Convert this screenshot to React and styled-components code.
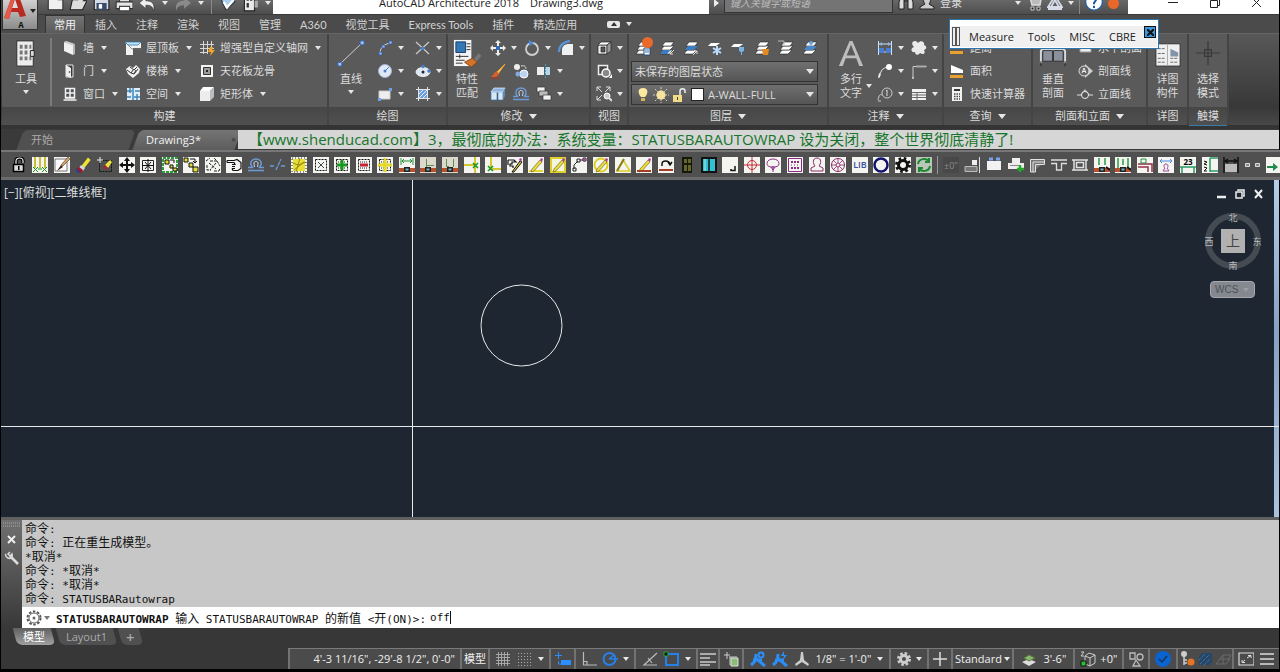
import { useState } from 'react';
import styled, { createGlobalStyle, css } from 'styled-components';

const SANS = `'Open Sans', 'Noto Sans CJK SC', sans-serif`;

const W = <path d="M0 0h16v16H0z" fill="#f4f4f0" />;
const pencil = <path d="M4 12l8-9 2 2-8 9-3 1z" fill="#e8dc3c" stroke="#6b5a12" strokeWidth=".6" />;
const pencilTip = <path d="M12 3l1-2 2 1-1 3z" fill="#b03aa0" />;
const dashBox = <path d="M2.500 2.500h11v11h-11z" fill="none" stroke="#111" strokeDasharray="2 1" />;
const wall = (
  <>
    <path d="M0 11h16v4H0z" fill="#b5512f" />
    <path d="M5 10h6v5H5z" fill="#222" />
    <path d="M6.500 11.500h3v2h-3z" fill="#6fb5c4" />
  </>
);
const layers = (
  <>
    <path d="M4 10l-3 4h9l4-4z" fill="#fff" stroke="#222" strokeWidth=".6" />
    <path d="M5 6l-3 4h9l4-4z" fill="#fff" stroke="#222" strokeWidth=".6" />
    <path d="M6 2L3 6h9l3-4z" fill="#fff" stroke="#222" strokeWidth=".6" />
  </>
);

const icons = {
  // ribbon: build
  wall: (
    <>
      <path d="M2 2l9 3v10l-9-4z" fill="#f1f1f1" />
      <path d="M11 5l2-1v10l-2 1z" fill="#b5b5b5" />
      <path d="M2 2l2-1 9 3-2 1z" fill="#d8d8d8" />
    </>
  ),
  door: (
    <>
      <path d="M4 2h7v12H4z" fill="#33383c" stroke="#e8e8e8" />
      <path d="M4 2l5 3v10l-5-2z" fill="#eee" />
      <circle cx="7.500" cy="9" r=".8" fill="#222" />
    </>
  ),
  window: <path d="M3.500 2.500h9v9h-9zM8 2v10M3 7h10M1.500 14h13M3 12h10" fill="#4d5357" stroke="#f2f2f2" strokeWidth="1.500" />,
  roof: (
    <>
      <path d="M0 2h16v6H8v7H1V4z" fill="#f2f2f2" />
      <path d="M0 2h16l-3 3H3z" fill="#c5e5fa" stroke="#2b79ad" strokeWidth=".8" />
      <path d="M3 5l4 4h9" stroke="#777" fill="none" strokeWidth=".8" />
    </>
  ),
  stairs: (
    <>
      <path d="M1 6l4-3 3 2 3-3 4 4-1 4-6 5-5-4z" fill="#f0f0f0" />
      <path d="M2 7l4 3 2-3M6 10l3 1 2-4M5 4l4 3 3-3M9 11l4-5" stroke="#333" fill="none" />
    </>
  ),
  space: (
    <>
      <path d="M2 2h13v12H2z" fill="#e2edf5" />
      <path d="M2 5h5M10 5h5M2 11h4M9 11h6M5 2v5M12 8v6M8 2v12" stroke="#3d86bd" strokeWidth="1.500" />
    </>
  ),
  grid: (
    <>
      <path d="M4.500 1v13M8.500 1v13M12.500 1v8M1 4.500h14M1 8.500h14M1 12.500h8" stroke="#d8d8d8" fill="none" />
      <path d="M11 7l-2 5h3l-1 4 5-6h-3l1-3z" fill="#f5a623" />
    </>
  ),
  ceiling: (
    <>
      <path d="M2 2h12v12H2z" fill="#f4f4f4" />
      <path d="M4.500 4.500h7v7h-7z" fill="#9a9a9a" stroke="#333" />
      <path d="M7 7h2v2H7z" fill="#222" />
    </>
  ),
  cube: (
    <>
      <path d="M1 5h10v10H1z" fill="#ededed" />
      <path d="M1 5l3-4h11l-4 4z" fill="#fff" />
      <path d="M11 5l4-4v10l-4 4z" fill="#bdbdbd" />
    </>
  ),
  // ribbon: draw
  arc: (
    <>
      <path d="M3 14C3 7 7 4 14 3" fill="none" stroke="#d5d5d5" />
      <path d="M2 12h3v3H2zM5 5h3v3H5zM12 1h3v3h-3z" fill="#8fb6ef" stroke="#2c5aa8" strokeWidth=".7" />
    </>
  ),
  xline: (
    <>
      <path d="M1 2l13 12M14 2L1 14" stroke="#ccc" strokeWidth="1.200" />
      <path d="M6 7h3v3H6z" fill="#3f86dd" />
    </>
  ),
  circle: (
    <>
      <circle cx="8" cy="8" r="6.500" fill="#dfe8f4" stroke="#9fb4d2" />
      <path d="M8 8l4-4" stroke="#4c80c9" />
      <circle cx="8" cy="8" r="1.500" fill="#4c80c9" />
    </>
  ),
  ellipse: (
    <>
      <ellipse cx="8" cy="9" rx="7" ry="4.500" fill="#dde8f6" stroke="#eee" />
      <circle cx="8" cy="9" r="1.500" fill="#222" />
      <circle cx="8" cy="3.500" r="1.800" fill="#4c80c9" />
      <circle cx="14" cy="8" r="1.800" fill="#4c80c9" />
    </>
  ),
  rect: (
    <>
      <path d="M2 5h11v8H2z" fill="#eee" stroke="#ccc" />
      <path d="M12 2h3v3h-3zM1 12h3v3H1z" fill="#6ea1ea" />
    </>
  ),
  hatch: (
    <>
      <path d="M3.500 1v14M12.500 1v14M1 3.500h14M1 12.500h14" stroke="#e4e4e4" fill="none" />
      <path d="M4 4h8v8H4z" fill="#6c9fe0" />
      <path d="M4 8l4-4M4 12l8-8M8 12l4-4" stroke="#e2eeff" />
    </>
  ),
  // ribbon: modify
  move: (
    <>
      <path d="M8 0l3 3H9v4h4V5l3 3-3 3V9H9v4h2l-3 3-3-3h2V9H3v2L0 8l3-3v2h4V3H5z" fill="#eee" />
      <path d="M6 6h4v4H6z" fill="#2f6cbc" />
    </>
  ),
  rotate: (
    <>
      <circle cx="8" cy="9" r="6" fill="none" stroke="#d0d0d0" strokeWidth="1.800" />
      <path d="M5 0l5 3-5 3z" fill="#4b8be0" />
    </>
  ),
  fillet: (
    <>
      <path d="M4 15V10c0-4 3-6 7-6h4v11z" fill="#eef0f2" />
      <path d="M1 12C1 5 5 2 12 1" fill="none" stroke="#5a95e0" strokeWidth="2" />
    </>
  ),
  brush: (
    <>
      <path d="M15 1L7 9l1 2z" fill="#f6d68b" stroke="#f0a22a" />
      <path d="M7 8l2 3c-2 4-5 3-8 3 2-1 3-5 6-6z" fill="#d4622a" />
      <path d="M1 15h9" stroke="#b9330f" />
    </>
  ),
  copy: (
    <>
      <circle cx="4" cy="4" r="3" fill="#eee" />
      <circle cx="11" cy="11" r="4" fill="#bcd3f3" stroke="#fff" />
      <circle cx="5" cy="11" r="2.500" fill="#83a9dd" />
      <path d="M8 3c4-1 5 1 5 3" fill="none" stroke="#ddd" />
    </>
  ),
  stretch: (
    <>
      <path d="M1 4h7v8H1z" fill="#eee" />
      <path d="M9 4h5v8H9z" fill="#b4d7ec" />
      <path d="M9.500 1v14" stroke="#3c9bd1" strokeDasharray="2 1" />
    </>
  ),
  array3d: (
    <>
      <path d="M1 6h6v8H1zM8 6h5v8H8z" fill="#d8e8f7" stroke="#426f9f" strokeWidth=".7" />
      <path d="M4 2h11l-2 4H1z" fill="#8ab3de" stroke="#e9f3ff" strokeWidth=".7" />
      <path d="M13 6l2-4v8l-2 4z" fill="#5f8bb9" />
    </>
  ),
  offset: (
    <g fill="none">
      <path d="M0 13.500h16M0 10.500h4.500L3 8C1 0 15 0 13 8l-1.500 2.500H16" stroke="#6c9bd8" strokeWidth="1.500" />
      <path d="M6.500 10L6 7c-1-3.500 5-3.500 4 0l-.5 3" stroke="#c4d6ef" />
    </g>
  ),
  scale: (
    <g stroke="#333" strokeWidth=".7">
      <path d="M1 1h8v5H1z" fill="#f2f2f2" />
      <path d="M3 5h9v5H3z" fill="#bbb" />
      <path d="M7 9h8v5H7z" fill="#f2f2f2" />
    </g>
  ),
  // ribbon: view
  box: (
    <g stroke="#222" strokeWidth=".7">
      <path d="M2 5h9v9H2z" fill="#eee" />
      <path d="M2 5l3-3h10l-4 3z" fill="#fff" />
      <path d="M11 5l4-3v9l-4 3z" fill="#9b9b9b" />
      <path d="M5 7h4v5H5z" fill="#555" />
    </g>
  ),
  shapes: (
    <>
      <path d="M2.500 2.500h9v9h-9z" fill="#444" stroke="#eee" strokeWidth="1.500" />
      <circle cx="10" cy="10" r="4" fill="#888" stroke="#fff" strokeWidth="1.500" />
      <path d="M13 15h3v-4z" fill="#fff" />
    </>
  ),
  zoomAll: (
    <>
      <path d="M1 1l5 5M14 1L9 6M1 14l5-5M1 5V1h4M10 1h4v4M1 10v4h4" stroke="#ddd" fill="none" />
      <circle cx="11" cy="10" r="3" fill="#ccc" stroke="#fff" />
      <path d="M13 12l3 3" stroke="#ddd" strokeWidth="2" />
    </>
  ),
  // ribbon: layers
  layerProps: (
    <>
      {layers}
      <path d="M9 8h6v7H9z" fill="#fff" stroke="#274c7b" />
      <path d="M10 10h4M10 12h4" stroke="#2f71b8" />
    </>
  ),
  layerOff: <>{layers}<path d="M4 10l-3 4h7l4-4z" fill="#3a7cc2" /><path d="M15 10l-4 4m0-3v3h3" stroke="#ddd" fill="none" /></>,
  layerOn: <>{layers}<path d="M5 6l-3 4h9l4-4z" fill="#3a7cc2" /><path d="M10 15l4-4m-3 0h3v3" stroke="#ddd" fill="none" /></>,
  layerFreeze: (
    <>
      <path d="M4 3L1 6h8l4-3z" fill="#fff" />
      <path d="M10 6v9M6 8l8 5M14 8l-8 5" stroke="#b9dcff" strokeWidth="2" />
    </>
  ),
  layerPin: (
    <>
      <path d="M4 4L1 7h8l4-3z" fill="#fff" />
      <path d="M9 7h5v4l-2 1v3h-1v-3l-2-1z" fill="#78b3e8" />
    </>
  ),
  layerLock: <>{layers}<path d="M8 9h7l-1 6H9z" fill="#e58b23" /></>,
  layerMatch: <>{layers}<path d="M0 1h6v4" stroke="#bbb" fill="none" /></>,
  layerIso: <>{layers}<path d="M5 6l-3 4h9l4-4z" fill="#4a86c8" /><circle cx="9" cy="3" r="2" fill="#6aa5e4" /></>,
  bulb: (
    <>
      <path d="M8 1c6 0 5 6 2 9H6C3 7 2 1 8 1z" fill="#fbe9a0" />
      <path d="M6 11h4v3H6z" fill="#d6b25a" />
    </>
  ),
  sun: (
    <>
      <path d="M8 0v16M0 8h16M2 2l12 12M14 2L2 14" stroke="#d5ccaa" strokeDasharray="2 1" />
      <circle cx="8" cy="8" r="4.500" fill="#f7e3a0" />
    </>
  ),
  unlock: (
    <>
      <path d="M9 8V4c0-3 5-3 5 0v2" stroke="#eee" strokeWidth="1.500" fill="none" />
      <path d="M2 8h9v7H2z" fill="#f2dc86" />
      <path d="M6 10h1v3H6z" fill="#444" />
    </>
  ),
  // ribbon: annotation
  dim: (
    <>
      <path d="M1.500 1v14M14.500 1v14M2 4h12M2 12h12" stroke="#cfe0f7" fill="none" />
      <path d="M2 8h5v5H2zM9 8h5v5H9z" fill="#4a7fd0" />
      <path d="M2 4l3-2v4zM14 4l-3-2v4z" fill="#8db5ec" />
    </>
  ),
  leader: (
    <>
      <path d="M2 15C3 7 6 5 10 4" stroke="#ddd" fill="none" strokeWidth="1.200" />
      <path d="M1 15l1-5 2 2z" fill="#eee" />
      <circle cx="12" cy="4" r="3" fill="#fff" />
    </>
  ),
  tag: (
    <>
      <path d="M1 14c1-5 2-6 4-5M1 15h3" stroke="#ccc" fill="none" />
      <circle cx="10" cy="7" r="5" fill="none" stroke="#ccc" />
      <path d="M9 5l1-1v6" stroke="#ddd" fill="none" />
    </>
  ),
  cloud: <path d="M4 1c2 0 2 1 3 2 2-3 7-2 6 2 3 1 3 4 0 5 2 4-1 5-4 3-2 3-5 2-5-1-4 1-5-4-1-5C0 4 1 1 4 1z" fill="#eaeaea" />,
  mleader: (
    <>
      <path d="M2 15V3.500h4" stroke="#ccc" fill="none" />
      <path d="M6 2v3M8 2v3M10 2v3M12 2v3M14 2v3M5 3.500h11" stroke="#aaa" />
      <path d="M1 15h2" stroke="#fff" />
    </>
  ),
  table: (
    <>
      <path d="M1 3h14v11H1z" fill="#f1f1f1" />
      <path d="M1 6.500h14M1 9h14M1 11.500h14M6 6v8" stroke="#666" />
    </>
  ),
  // ribbon: inquiry and sections
  ruler: <><path d="M2 3h11v6H2z" fill="#eee" /><path d="M1 11h13v3H1z" fill="#e9a02f" /></>,
  area: <><path d="M2 2l12 5v3H2z" fill="#fff" /><path d="M1 12h13v3H1z" fill="#e9a02f" /></>,
  calc: (
    <>
      <path d="M3 1h10v14H3z" fill="#f2f2f2" />
      <path d="M5 3h6v2H5z" fill="#333" />
      <path d="M5 8h6M5 10.500h6M5 13h6" stroke="#444" strokeWidth="1.500" strokeDasharray="1.500 1" />
    </>
  ),
  hsec: <path d="M3 3h11v9H3z" fill="#eee" stroke="#999" />,
  secLine: (
    <>
      <path d="M8 1l8 7-8 7" fill="#cfcfcf" />
      <circle cx="7" cy="8" r="5" fill="#666" stroke="#ddd" />
      <path d="M5 10l2-5 2 5M5.500 8.500h3" stroke="#eee" fill="none" />
    </>
  ),
  elevLine: (
    <>
      <path d="M0 9h16" stroke="#ddd" />
      <path d="M3 9l5-6 5 6z" fill="#bbb" />
      <circle cx="8" cy="9" r="3.500" fill="#555" stroke="#eee" />
    </>
  ),
  // toolbar
  tLock: (
    <>
      <path d="M5 7V4c0-4 7-4 7 0v2" fill="none" stroke="#000" strokeWidth="3.500" />
      <path d="M5 7V4c0-4 7-4 7 0v2" fill="none" stroke="#eee" strokeWidth="1.200" />
      <path d="M2.500 7.500h10v7h-10z" fill="#ddd" stroke="#000" strokeWidth="1.500" />
      <path d="M7 9h1.500v4H7z" />
    </>
  ),
  tWalls: <>{W}<path d="M3 0v11M13 0v11M8 0v11" stroke="#c9bf3a" strokeWidth="2" /><path d="M1 10l5 5M6 10l-5 5M10 10l5 5M15 10l-5 5M6 12h4" stroke="#199519" /></>,
  tBrush: <>{W}<path d="M1 2h12v12H1z" fill="#fff" stroke="#777" /><path d="M14 0L7 8l2 1 7-7z" fill="#d8a15b" stroke="#222" strokeWidth=".5" /><path d="M7 8l2 2-6 4z" fill="#44210e" /></>,
  tEraser: <><path d="M6 9l7-9 3 3-7 9z" fill="#eee23a" stroke="#333" strokeWidth=".5" /><path d="M4 11l2-3 4 3-2 3z" fill="#cfd4e8" /><path d="M2 11l2-1 4 3-2 3-3-1z" fill="#9b1c23" /><path d="M1 12l3 4" stroke="#243ea0" strokeWidth="2" /></>,
  tEraseSel: <><path d="M2.500 3.500h12v11h-12z" fill="none" stroke="#111" strokeDasharray="2 1" /><path d="M8 8l5-5 2 2-4 6z" fill="#eee23a" /><path d="M6 10l2-2 3 3-2 2z" fill="#a3262c" /><path d="M3 0v6M0 3h6" stroke="#eee" /></>,
  tMove: <>{W}<path d="M8 0l3 4H9v3h3V5l4 3-4 3V9H9v3h2l-3 4-3-4h2V9H4v2L0 8l4-3v2h3V4H5z" fill="#111" /></>,
  tMoveBox: <>{W}<path d="M2.500 3.500h11v10h-11z" fill="none" stroke="#222" /><path d="M8 2v13M2 8.500h12M5 5l6 7M11 5l-6 7" stroke="#111" /></>,
  tCopyBox: <>{W}<path d="M1 1h14v14H1z" fill="none" stroke="#2a9d3d" strokeWidth="2" strokeDasharray="3 1" /><path d="M3 3h4v4H3zM8 8h3v3H8zM11 11h4v3h-4z" fill="#e3dc35" stroke="#111" /><path d="M8 3h4v3" stroke="#111" fill="none" /></>,
  tCopy: <>{W}<path d="M1 1h4v4H1zM6 6h4v4H6zM10 10h5v5h-5z" fill="#e3dc35" stroke="#111" /><path d="M7 2h5v4m-2-2l2 2 2-2" stroke="#111" fill="none" /></>,
  tTwist: <>{W}<path d="M1 4l4-3M5 4h7l-3-3M12 4l3 5M4 6l7 6M11 6l-6 7M2 8v5h4M9 14h5l1-3" stroke="#222" fill="none" strokeDasharray="3 1" /></>,
  tHand: <>{W}<path d="M1 3.500h7l3-1 4 3v6l-3 2H7l-1-2M1 5.500h7l1 2H6M6 9.500h3M6 11.500h3M1 3.500v2" stroke="#111" fill="none" strokeWidth="1.200" /></>,
  tBreak: <path d="M0 9h5M11 9h5M6 13l5-11" stroke="#6c9bd8" strokeWidth="1.300" strokeDasharray="4 1" fill="none" />,
  tYellowHatch: <>{W}<path d="M2 2h12v12H2z" fill="#e9df32" /><path d="M2 6l5 2 8-3M5 15L9 1M3 13l10-8" stroke="#968b17" fill="none" /><path d="M1 1h14v14H1z" fill="none" stroke="#222" strokeDasharray="1 2" /></>,
  tXbox: <>{W}{dashBox}<path d="M5 5l6 6M11 5l-6 6" stroke="#444" /></>,
  tPlus: <>{W}{dashBox}<path d="M4 5h8M4 11h8" stroke="#222" strokeDasharray="1 1" /><path d="M8 3v10M3 8h10" stroke="#17991f" strokeWidth="3" /></>,
  tMinus: <>{W}{dashBox}<path d="M4 5h8M4 11h8" stroke="#222" strokeDasharray="1 1" /><path d="M4 8h8" stroke="#c22335" strokeWidth="3" /></>,
  tPlusY: <>{W}{dashBox}<path d="M4 5h8M4 11h8" stroke="#222" strokeDasharray="1 1" /><path d="M8 1v14M1 8h14" stroke="#e6d827" strokeWidth="3" /></>,
  tWallDim: <>{W}<path d="M2 1v7M14 1v7M3 4h10M5 2L3 4l2 2M11 2l2 2-2 2" stroke="#259135" fill="none" />{wall}</>,
  tWallL: <><path d="M0 0h16v16H0z" fill="#dcd8cc" /><path d="M6.500 2v8M6 8.500h8" stroke="#599054" />{wall}</>,
  tWallLL: <><path d="M0 0h16v16H0z" fill="#dcd8cc" /><path d="M4.500 2v8M11.500 2v8M4 9.500h3" stroke="#599054" />{wall}</>,
  tTrim: <>{W}<path d="M0 8h10M11 0v16" stroke="#d6c72e" strokeWidth="2" /><path d="M9 6l5 5M14 6l-5 5" stroke="#18951b" strokeWidth="1.500" /></>,
  tExtend: <>{W}<path d="M6 0v10M7 12h9" stroke="#d6c72e" strokeWidth="2" /><path d="M3 9l5 5M8 9l-5 5" stroke="#18951b" strokeWidth="1.500" /></>,
  tHandPen: <>{W}<path d="M1 3h6l2 2H5v2H3v2h3v2M1 3v5" stroke="#111" fill="none" strokeWidth="1.200" /><path d="M5 15l8-11 2 1-8 10z" fill="#d9cc2e" stroke="#111" />{pencilTip}</>,
  tPen: <>{W}<path d="M1 14h14" stroke="#e3d62d" strokeWidth="2" />{pencil}{pencilTip}</>,
  tPenBox: <><path d="M1 1h14v14H1z" fill="#f4f4e2" stroke="#ded12b" strokeWidth="2" />{pencil}{pencilTip}</>,
  tPoly: <>{W}<path d="M3 12V8l4-4M2 11h3v3H2zM6 2h3v3H6zM9 3h3M12 1h3v3h-3z" stroke="#222" fill="none" />{pencilTip}</>,
  tPenCircle: <>{W}<circle cx="8" cy="8" r="6.500" fill="none" stroke="#ddcf26" strokeWidth="2" />{pencil}{pencilTip}</>,
  tPenTri: <>{W}<path d="M2 14h13L8 3z" fill="none" stroke="#d9cb27" strokeWidth="1.500" /><path d="M2 14l7-12" stroke="#8a7d18" strokeWidth="2" /></>,
  tPenWall: <>{W}{pencil}{pencilTip}<path d="M1 13h14v2H1z" fill="#a63d25" /></>,
  tArcWall: <>{W}<path d="M4 9V7c0-4 7-4 8 0M10 5l2 3 2-3" stroke="#111" strokeWidth="1.500" fill="none" /><path d="M1 12h14v2H1z" fill="#a63d25" /></>,
  tDoor: <><path d="M3 0h10v16H3z" fill="#15180a" /><path d="M5 2h3v4H5zM9 2h3v4H9zM5 8h3v6H5zM9 8h3v6H9z" fill="#64672b" /></>,
  tGlass: <><path d="M1 1h14v14H1z" fill="#32bfd0" stroke="#111" strokeWidth="2" /><path d="M8 1v14" stroke="#111" strokeWidth="1.500" /><path d="M4 2v12" stroke="#9fe9ee" /></>,
  tCorner: <>{W}<path d="M13 9v4.500H9V12" stroke="#111" fill="none" strokeWidth="1.500" /></>,
  tTarget: <>{W}<circle cx="8" cy="8" r="4.500" fill="none" stroke="#c42b35" /><path d="M8 0v16M0 8h16" stroke="#c42b35" /></>,
  tTree: <>{W}<path d="M8 15V9M2 6.500c0-6 12-6 12 0 0 3-3 3.500-6 3.500S2 9.500 2 6.500zM6 10l2 3 2-3" fill="none" stroke="#8b2b86" /></>,
  tDots: <>{W}<path d="M1.500 1.500h13v13h-13z" fill="none" stroke="#8b2b86" /><path d="M4 5h8M4 11h8" stroke="#8b2b86" strokeWidth="2" strokeDasharray="2 1" /><path d="M4 8h8" stroke="#8b2b86" strokeDasharray="1 2" /></>,
  tPerson: <>{W}<path d="M8 1c5 0 4 6 2 8l4 2v3H2v-3l4-2C4 7 3 1 8 1z" fill="none" stroke="#8b2b6b" /></>,
  tWheel: <>{W}<circle cx="8" cy="8" r="6.500" fill="none" stroke="#8b2b6b" /><circle cx="8" cy="8" r="2" fill="none" stroke="#8b2b6b" /><path d="M8 1v5M8 10v5M1 8h5M10 8h5M3 3l3 3M13 3l-3 3M3 13l3-3M13 13l-3-3" stroke="#8b2b6b" strokeWidth=".8" /></>,
  tLib: <>{W}<text x="8" y="11" textAnchor="middle" fontSize="9" fontWeight="600" fontFamily="Open Sans, sans-serif" fill="#3a4fa0">LIB</text></>,
  tRing: <>{W}<circle cx="8" cy="8" r="6.500" fill="none" stroke="#12136e" strokeWidth="2.500" /></>,
  tGear: <>{W}<circle cx="8" cy="8" r="6.500" fill="none" stroke="#111" strokeWidth="3" strokeDasharray="2.500 2.600" /><circle cx="8" cy="8" r="4.500" fill="none" stroke="#111" strokeWidth="3" /></>,
  tRefresh: <><path d="M0 0h16v16H0z" fill="#b9c6b8" /><path d="M2 7c1-6 8-6 11-3M13 1v4H9M14 9c-1 6-8 6-11 3M3 15v-4h4" fill="none" stroke="#1e8731" strokeWidth="2" /></>,
  tLevel: <><path d="M0 0h16v16H0z" fill="#484848" /><text x="8" y="12" textAnchor="middle" fontSize="9" fontFamily="Open Sans, sans-serif" fill="#8c8c8c">±0"</text></>,
  tStep: <><path d="M1 9.500h12v5H1z" fill="#777" stroke="#bbb" /><path d="M8 3h5v5H8z" fill="#eee" /><path d="M15.500 0v16" stroke="#ddd" /></>,
  tPanel: <><path d="M1 4h14v9H1z" fill="#f2f2f2" /><path d="M3 2h4M10 2h4" stroke="#78a3e6" strokeWidth="3" /></>,
  tPrint: <><path d="M4 1h8v5H4zM0 6h16v6H0z" fill="#eee" /><path d="M2 8.500h9" stroke="#888" /><path d="M12 8v7M9 12h7" stroke="#24a82a" strokeWidth="2.500" /></>,
  tElbow: <path d="M1.500 2.500h14v5h-9V15h-5z M4 15V5h11" fill="#777" stroke="#e3e3e3" />,
  tTee: <path d="M0 3h16M0 6.500h5.500V13h5V6.500H16" fill="none" stroke="#ddd" strokeWidth="1.300" />,
  tFrame: <path d="M0 3h16M0 13h16M4.500 5.500h7v5h-7zM2 3v10M14 3v10" fill="none" stroke="#e0e0e0" strokeWidth="1.500" />,
  tGreenA: <>{W}<path d="M5 1v7M11 1v7" stroke="#2a9a48" strokeWidth="1.500" />{wall}<path d="M12 10l4 3" stroke="#111" strokeWidth="2" /></>,
  tGreenB: <>{W}<path d="M3 1v10M8 2v6M13 1v10" stroke="#2a9a48" strokeWidth="1.500" />{wall}<path d="M12 10l4 3" stroke="#111" strokeWidth="2" /></>,
  tRedCorner: <>{W}<path d="M1 7h14v8M1 10h10v5" fill="none" stroke="#952e47" strokeWidth="1.500" /><path d="M4 2h5v4H4z" fill="none" stroke="#259144" /></>,
  tDimPerson: <>{W}<path d="M2 4h12M4 2L2 4l2 2M12 2l2 2-2 2" fill="none" stroke="#4a8be0" /><path d="M8 7c3 0 2 4 1 4l2 3H5l2-3C6 11 5 7 8 7z" fill="none" stroke="#a04a9a" /></>,
  tNumH: <>{W}<path d="M0 10h16M2 10v6M14 10v6" stroke="#2a9a63" strokeWidth="1.500" /><text x="8" y="8" textAnchor="middle" fontSize="8" fontWeight="700" fontFamily="Open Sans, sans-serif">23</text></>,
  tNumV: <>{W}<path d="M8 1v14M8 1h8M8 14h8" stroke="#2a9a63" strokeWidth="1.500" fill="none" /><path d="M2 4l3 1-3 2 3 1M2 10l3 1-3 3h3" fill="none" stroke="#111" /></>,
  tDimBlack: <><path d="M1 0v16M15 0v16" stroke="#111" strokeWidth="1.500" /><path d="M2 7h12v8H2z" fill="#bbb" /><path d="M2 4h12M5 2L2 4l3 2M11 2l3 2-3 2" stroke="#111" fill="none" strokeWidth="1.500" /></>,
  tSquares: <path d="M.5 6.500h4v3h-4zM10.500 6.500h4v3h-4z" fill="#888" stroke="#ddd" />,
  tArrowG: <>{W}<path d="M1 9h6V6l5 4-5 4v-3H1z" fill="#228b4c" /></>,
  // status bar
  sGrid: <path d="M3.500 1v14M6.500 1v14M9.500 1v14M12.500 1v14M1 3.500h14M1 6.500h14M1 9.500h14M1 12.500h14" stroke="#b9b9b9" strokeWidth=".8" />,
  sSnap: <path d="M1 2.500h14M1 5.500h14M1 8.500h14M1 11.500h14M1 14.500h14" stroke="#aaa" strokeDasharray="1 2" />,
  sDyn: <><path d="M3.500 1v7M0 4.500h7M3.500 10v3H6" stroke="#2b8ffb" fill="none" /><path d="M6 9h10v5H6z" fill="#2b8ffb" /></>,
  sOrtho: <path d="M2.500 1v13H16M2 10.500h4V14" fill="none" stroke="#bbb" strokeWidth="1.200" />,
  sPolar: <><circle cx="7.500" cy="8" r="6" fill="none" stroke="#2580ea" strokeWidth="2" /><path d="M7 8h9M7 8l5-4" stroke="#2580ea" strokeWidth="1.500" /></>,
  sAngle: <path d="M15 2L2 14h13M6 7l4 5" fill="none" stroke="#bbb" strokeWidth="1.200" />,
  sSnapBox: <><path d="M3 3h12v11H3z" fill="none" stroke="#2580ea" strokeWidth="2" /><path d="M1 1h4v4H1z" fill="#0c1e0c" stroke="#27a33a" /></>,
  sLines: <path d="M0 3h16M0 7h10M0 11h16M0 14h10" stroke="#ccc" strokeWidth="1.500" />,
  sCycle: <><path d="M4 1v7M1 4h6M6 6h8M7 6v8" stroke="#ccc" /><path d="M8 7h7v8H8z" fill="#8bbd78" stroke="#ddd" /></>,
  sMan: <><path d="M6 3c0 6-1 8-5 11M6 8c3 1 4 3 9 7M3 9h9" stroke="#2b8ffb" strokeWidth="3" fill="none" /><circle cx="11" cy="4" r="2.500" fill="none" stroke="#2b8ffb" strokeWidth="2" /></>,
  sManBolt: <><path d="M6 3c0 6-1 8-5 11M6 8c3 1 4 3 9 7M3 9h9" stroke="#2b8ffb" strokeWidth="3" fill="none" /><path d="M12 0L9 5h3l-1 4 4-5h-3z" fill="#2b8ffb" /></>,
  sScale: <path d="M7 1h2l1 8 5 4-1 2-6-4-6 4-1-2 5-4z" fill="#ccc" />,
  sGear: <><circle cx="8" cy="8" r="5.500" fill="none" stroke="#ccc" strokeWidth="3" strokeDasharray="2.500 1.800" /><circle cx="8" cy="8" r="3.500" fill="none" stroke="#ccc" strokeWidth="3" /></>,
  sPlus: <path d="M8 1v14M1 8h14" stroke="#ddd" strokeWidth="1.500" />,
  sStack: <><path d="M1 11l7-3 7 3-7 4z" fill="#ddd" /><path d="M3 7l5-3 6 3-6 3z" fill="#8cb66d" stroke="#567a3f" /></>,
  sCube: <><path d="M5 5l4-3 6 2v8l-5 3-5-2zM5 5l5 2 5-3M10 7v8" fill="none" stroke="#ccc" /><path d="M1 10h5v5H1z" fill="#2cbe39" stroke="#111" /><path d="M1 1h3L1 5h3" fill="none" stroke="#ccc" /></>,
  sShapes: <><path d="M2 2h5v6H2z" fill="none" stroke="#bbb" strokeWidth="1.300" /><circle cx="12" cy="6" r="3" fill="none" stroke="#bbb" strokeWidth="1.300" /><path d="M8 9l4 6H5z" fill="none" stroke="#bbb" strokeWidth="1.300" /></>,
  sBlue: <><circle cx="8" cy="8" r="8" fill="#0a63cf" /><path d="M4 8l3 3 5-6" stroke="#14365f" strokeWidth="1.500" fill="none" /></>,
  sPin: <><circle cx="4" cy="3" r="3" fill="#ccc" /><path d="M4 3v11M4 9h3M4 12h3" stroke="#ccc" strokeWidth="1.500" /><circle cx="11" cy="11" r="3.500" fill="#e57425" /></>,
  sHatch: <><path d="M2 5l3-3h10v9l-3 3H2z" fill="#264766" /><path d="M2 9l6-6M3 13l9-9M7 14l6-6" stroke="#4b8dc7" strokeDasharray="1 1" /></>,
  sIso: <path d="M1 13l4-5h10l-4 5zM4 9l4-5h8l-3 5M8 4v9" fill="none" stroke="#6b6b6b" />,
  sFull: <><path d="M1 2h15v12H1z" fill="none" stroke="#ddd" strokeWidth="1.200" /><path d="M9 7l4-2.500M10 4.500h3V7M7 9l-3 2.500M4 9v2.500h3" stroke="#ddd" fill="none" /></>,
  sMenu: <path d="M1 3h14M1 8h14M1 13h14" stroke="#ddd" strokeWidth="1.500" />,
  // title bar
  qNew: <path d="M2 1h9l4 4v9H2zM11 1v4h4" fill="#f0f0f0" stroke="#333" />,
  qOpen: <path d="M1 14L3 5h5l2-3 5 2-2 2h3l-4 8z" fill="#ddd" stroke="#222" />,
  qSave: <><path d="M2 1h13v13H2z" fill="#d5dbe4" stroke="#222" /><path d="M4 8h9v6H4z" fill="#354b6d" /><path d="M6 9h3v4H6z" fill="#fff" /></>,
  qPrint: <><path d="M4 2h9v5H4zM1 7h15v6H1z" fill="#e5e5e5" stroke="#333" /><path d="M4 11h9v4H4z" fill="#fff" stroke="#444" /></>,
  qUndo: <path d="M1 8l6-5v3c6 0 8 3 7 9-1-4-3-5-7-5v3z" fill="#eee" stroke="#333" strokeWidth=".6" />,
  qRedo: <path d="M15 8L9 3v3C3 6 1 9 2 15c1-4 3-5 7-5v3z" fill="#8a8a8a" />,
  qSheet: <><path d="M2 3l5 11 8-7-5-6z" fill="#a9d0ee" stroke="#333" /><path d="M5 7l3 5 6-7" stroke="#fff" fill="none" strokeWidth="2" /></>,
  qDoor: <><path d="M3 0h9v15H3z" fill="#e9e9e9" stroke="#222" /><path d="M5 3h2v3H5zM8 3h2v3H8zM5 8h2v4H5z" fill="#333" /><path d="M12 6h3v6h-3" fill="#aaa" /></>,
  qFind: <path d="M1 14V7l2-5h3v12zM10 14V2h3l2 5v7zM6 6h4" fill="#ddd" stroke="#222" />,
  qUser: <path d="M8 1c5 0 4 6 2 8l5 3v2H1v-2l5-3C4 7 3 1 8 1z" fill="#ccc" stroke="#222" />,
  qCart: <><path d="M1 2h3l2 8h8l1-6H5" fill="#bbb" stroke="#ddd" strokeWidth="1.500" /><path d="M5 12h3v3H5zM11 12h3v3h-3z" fill="#222" stroke="#ccc" /></>,
  qApp: <path d="M8 1l7 11H1zM8 5l-4 7h8zM1 14h14" fill="none" stroke="#d6dde8" strokeWidth="1.800" />,
  qHelp: <><circle cx="8" cy="7" r="7.500" fill="#fff" stroke="#2a63a5" strokeWidth="1.300" /><path d="M5 5c0-4 6-3 5 0L8 8v1M8 10.500v2" fill="none" stroke="#205a9c" strokeWidth="1.800" /></>,
};

const Icon = ({ name, size = 16 }) => (
  <Svg width={size} height={size} viewBox="0 0 16 16" aria-hidden="true">{icons[name]}</Svg>
);

const bigIcons = {
  tools: (
    <>
      <path d="M6 3h17v26H6z" fill="#ececec" stroke="#2e2e2e" />
      <path d="M9 7h3v4H9zM14 7h3v4h-3zM19 7h2v4h-2zM9 13h3v4H9zM14 13h3v4h-3zM9 19h3v4H9zM14 19h3v4h-3zM19 19h2v4h-2z" fill="#777" />
      <path d="M20 13h4v6h-4z" fill="#ddd" stroke="#222" />
    </>
  ),
  line: (
    <>
      <path d="M4 27L27 5" stroke="#d6d6d6" />
      <path d="M2 25h4v4H2zM25 3h4v4h-4z" fill="#a5c5f6" stroke="#3565b1" />
    </>
  ),
  match: (
    <>
      <path d="M2 2h18v27H2z" fill="#f4f4f4" />
      <path d="M4 4h10v11H4z" fill="#3477b5" stroke="#173e67" />
      <path d="M15 6h4M15 9h4M15 12h4M4 19h13M4 23h9M4 26h7M8 17v4" stroke="#333" />
      <path d="M29 17l-6 7" stroke="#777" strokeWidth="4" />
      <path d="M13 25l8-4 5 4-6 5z" fill="#d3742a" stroke="#8a4514" />
    </>
  ),
  text: <path d="M3 29L14 3h3l11 26h-4l-3-8H10l-3 8zM11 18h9L15.500 7z" fill="#bdbdbd" />,
  section: (
    <>
      <path d="M2 13L8 5h14l7 8v13h-2V14H4v12H2z" fill="#d5dae0" />
      <path d="M5 13h10v11H5zM16 13h10v11H16z" fill="#8b919c" stroke="#333" />
      <path d="M3 24v5M28 24v5" stroke="#222" />
    </>
  ),
  detail: (
    <>
      <path d="M3 6h25v23H3z" fill="#efefef" stroke="#333" />
      <path d="M5 11h8M5 16h8M5 21h8M5 25h8M18 21h8M18 25h8" stroke="#666" strokeDasharray="3 1" />
      <path d="M18 11l8 4v4h-8z" fill="#8494a8" />
      <path d="M15 6v23" stroke="#aaa" />
    </>
  ),
  touch: <path d="M15.500 3v25M3 15.500h25M12 12h7v7h-7z" fill="none" stroke="#383838" strokeWidth="1.200" />,
};

const BigIcon = ({ name }) => (
  <Svg width={30} height={30} viewBox="0 0 31 31" aria-hidden="true">{bigIcons[name]}</Svg>
);

const ribbonTabs = ['常用', '插入', '注释', '渲染', '视图', '管理', 'A360', '视觉工具', 'Express Tools', '插件', '精选应用'];

const drawTools = [
  'tLock', 'tWalls', 'tBrush', 'tEraser', 'tEraseSel', 'tMove', 'tMoveBox', 'tCopyBox', 'tCopy', 'tTwist', 'tHand',
  'offset', 'tBreak', 'tYellowHatch', 'tXbox', 'tPlus', 'tMinus', 'tPlusY', 'tWallDim', 'tWallL', 'tWallLL', 'tTrim',
  'tExtend', 'tHandPen', 'tPen', 'tPenBox', 'tPoly', 'tPenCircle', 'tPenTri', 'tPenWall', 'tArcWall', 'tDoor', 'tGlass',
  'tCorner', 'tTarget', 'tTree', 'tDots', 'tPerson', 'tWheel', 'tLib', 'tRing', 'tGear', 'tRefresh',
];
const wallTools = [
  'tLevel', 'tStep', 'tPanel', 'tPrint', 'tElbow', 'tTee', 'tFrame', 'tGreenA', 'tGreenB', 'tRedCorner', 'tDimPerson',
  'tNumH', 'tNumV', 'tDimBlack', 'tSquares', 'tArrowG',
];

const history = ['命令:', '命令: 正在重生成模型。', '*取消*', '命令: *取消*', '命令: *取消*', '命令: STATUSBARautowrap'];

const statusCells = [
  { w: 172, text: `4'-3 11/16", -29'-8 1/2", 0'-0"`, end: true },
  { w: 28, text: '模型' },
  { w: 61, items: ['sGrid', 'sSnap', 'v'] },
  { w: 25, items: ['sDyn'] },
  { w: 60, items: ['sOrtho', 'sPolar', 'v'] },
  { w: 62, items: ['sAngle', 'sSnapBox', 'v'] },
  { w: 22, items: ['sLines'] },
  { w: 24, items: ['sCycle'] },
  { w: 147, items: ['sMan', 'sManBolt', 'sScale'], text: `1/8" = 1'-0"`, menu: true },
  { w: 38, items: ['sGear', 'v'] },
  { w: 24, items: ['sPlus'] },
  { w: 61, text: 'Standard', menu: true },
  { w: 61, items: ['sStack'], text: `3'-6"` },
  { w: 49, items: ['sCube'], text: '+0"' },
  { w: 26, items: ['sShapes'] },
  { w: 28, items: ['sBlue'] },
  { w: 56, items: ['sPin', 'sHatch', 'sIso'] },
  { w: 47, items: ['sFull', 'sMenu'] },
];

const Tool = ({ icon, label, menu }) => (
  <ToolButton type="button" aria-label={label || icon}>
    <Icon name={icon} />
    {label && <span>{label}</span>}
    {menu && <Arrow />}
  </ToolButton>
);

const BigTool = ({ icon, lines, menu, side, width }) => (
  <BigButton type="button" $w={width}>
    <BigIcon name={icon} />
    <BigLabel>
      <span>{lines.map((l) => <div key={l}>{l}</div>)}</span>
      {side && <SideArrow />}
    </BigLabel>
    {menu && <Arrow />}
  </BigButton>
);

const Panel = ({ title, width, menu, active, children }) => (
  <PanelBox $w={width}>
    <PanelBody>{children}</PanelBody>
    <PanelTitle $active={active}>
      {title}
      {menu && <Arrow $big />}
    </PanelTitle>
  </PanelBox>
);

// latin runs are set one size below the chinese glyphs
const Mixed = ({ text }) => text.split(/([\x20-\x7e]+)/).map((part, i) => (i % 2 ? <Mono key={i}>{part}</Mono> : part));

const Header = () => (
  <HeaderGrid>
    <AppButton type="button" aria-label="A">
      <Svg width="24" height="21" viewBox="0 0 24 21">
        <path d="M0 18L8-4h7l7 20-6 1-2-5H7l-2 7z" fill="#b92b20" />
        <path d="M8 8l3-9 3 9z" fill="#ddd" />
        <path d="M0 18L8-4l3 1-6 22z" fill="#e25a4a" />
      </Svg>
      <AppLetter>A</AppLetter>
      <AppArrow />
    </AppButton>
    <TitleBar>
      <QuickAccess>
        {['qNew', 'qOpen', 'qSave', 'qPrint', 'qUndo'].map((n) => <QuickButton key={n} type="button" aria-label={n}><Icon name={n} size={18} /></QuickButton>)}
        <Arrow />
        <QuickButton type="button" aria-label="redo"><Icon name="qRedo" size={18} /></QuickButton>
        <Arrow />
        <BarLine />
        <QuickButton type="button" aria-label="sheet"><Icon name="qSheet" size={18} /></QuickButton>
        <QuickButton type="button" aria-label="project"><Icon name="qDoor" size={18} /></QuickButton>
        <Arrow />
      </QuickAccess>
      <Caption>
        <span>AutoCAD Architecture 2018</span>
        <span>Drawing3.dwg</span>
      </Caption>
      <InfoCenter>
        <RightArrow />
        <Search aria-label="search" placeholder="键入关键字或短语" />
        <Icon name="qFind" />
        <Icon name="qUser" />
        <SignIn href="#">登录</SignIn>
        <Arrow />
        <Icon name="qCart" />
        <Icon name="qApp" />
        <Arrow />
        <BarLine />
        <Icon name="qHelp" size={18} />
        <Dot />
      </InfoCenter>
      <WindowButtons>
        <button type="button" aria-label="minimize"><Svg width="10" height="10"><path d="M0 4.500h10" stroke="#222" /></Svg></button>
        <button type="button" aria-label="restore"><Svg width="10" height="10"><path d="M.5 2.500h7v7h-7zM2.500 2V.5h7v7H8" fill="none" stroke="#222" /></Svg></button>
        <button type="button" aria-label="close"><Svg width="10" height="10"><path d="M0 0l9 9M9 0L0 9" stroke="#222" /></Svg></button>
      </WindowButtons>
    </TitleBar>
    <TabBar>
      {ribbonTabs.map((t, i) => <RibbonTab key={t} type="button" $active={i === 0}>{t}</RibbonTab>)}
      <Collapse type="button" aria-label="collapse"><Arrow $up /></Collapse>
      <Arrow />
    </TabBar>
  </HeaderGrid>
);

const Ribbon = () => (
  <RibbonBar>
    <Panel title="构建" width={327}>
      <BigTool icon="tools" lines={['工具']} menu width={48} />
      <Divider />
      <Columns>
        <Column><Tool icon="wall" label="墙" menu /><Tool icon="door" label="门" menu /><Tool icon="window" label="窗口" menu /></Column>
        <Column><Tool icon="roof" label="屋顶板" menu /><Tool icon="stairs" label="楼梯" menu /><Tool icon="space" label="空间" menu /></Column>
        <Column><Tool icon="grid" label="增强型自定义轴网" menu /><Tool icon="ceiling" label="天花板龙骨" /><Tool icon="cube" label="矩形体" menu /></Column>
      </Columns>
    </Panel>
    <Panel title="绘图" width={119}>
      <BigTool icon="line" lines={['直线']} menu width={44} />
      <Columns $gap={11}>
        <Column $pad={4}><Tool icon="arc" menu /><Tool icon="circle" menu /><Tool icon="rect" menu /></Column>
        <Column><Tool icon="xline" menu /><Tool icon="ellipse" menu /><Tool icon="hatch" menu /></Column>
      </Columns>
    </Panel>
    <Panel title="修改" width={143} menu>
      <BigTool icon="match" lines={['特性', '匹配']} width={38} />
      <Column $pad={4}>
        <Row><Tool icon="move" menu /><Tool icon="rotate" menu /><Tool icon="fillet" menu /></Row>
        <Row><Tool icon="brush" /><Tool icon="copy" /><Tool icon="stretch" menu /></Row>
        <Row><Tool icon="array3d" /><Tool icon="offset" /><Tool icon="scale" menu /></Row>
      </Column>
    </Panel>
    <Panel title="视图" width={38}>
      <Column $pad={5}><Tool icon="box" menu /><Tool icon="shapes" menu /><Tool icon="zoomAll" menu /></Column>
    </Panel>
    <Panel title="图层" width={200} menu>
      <LayerColumn>
        <LayerIcons>
          {['layerProps', 'layerOff', 'layerOn', 'layerFreeze', 'layerPin', 'layerLock', 'layerMatch', 'layerIso'].map((n) => (
            <Tool key={n} icon={n} />
          ))}
          <Alert />
        </LayerIcons>
        <ComboBox>
          <select aria-label="图层状态"><option>未保存的图层状态</option></select>
          <Arrow $big />
        </ComboBox>
        <ComboBox>
          <Icon name="bulb" /><Icon name="sun" /><Icon name="unlock" /><Swatch />
          <select aria-label="图层"><option>A-WALL-FULL</option></select>
          <Arrow $big />
        </ComboBox>
      </LayerColumn>
    </Panel>
    <Panel title="注释" width={115} menu>
      <BigTool icon="text" lines={['多行', '文字']} side width={44} />
      <Columns>
        <Column $pad={4}><Tool icon="dim" menu /><Tool icon="leader" menu /><Tool icon="tag" menu /></Column>
        <Column><Tool icon="cloud" menu /><Tool icon="mleader" menu /><Tool icon="table" menu /></Column>
      </Columns>
    </Panel>
    <Panel title="查询" width={89} menu>
      <Column $pad={5}><Tool icon="ruler" label="距离" /><Tool icon="area" label="面积" /><Tool icon="calc" label="快速计算器" /></Column>
    </Panel>
    <Panel title="剖面和立面" width={115} menu>
      <BigTool icon="section" lines={['垂直', '剖面']} width={40} />
      <Column $pad={4}><Tool icon="hsec" label="水平剖面" /><Tool icon="secLine" label="剖面线" /><Tool icon="elevLine" label="立面线" /></Column>
    </Panel>
    <Panel title="详图" width={41}><BigTool icon="detail" lines={['详图', '构件']} width={39} /></Panel>
    <Panel title="触摸" width={40} active><BigTool icon="touch" lines={['选择', '模式']} width={38} /></Panel>
    <FloatingBar>
      <FloatCaption />
      <FloatMenu>
        <Grip />
        <FloatItems>
          {['Measure', 'Tools', 'MISC', 'CBRE'].map((m) => <button key={m} type="button">{m}</button>)}
        </FloatItems>
        <FloatClose type="button" aria-label="close">
          <Svg width="7" height="7"><path d="M0 0l7 7M7 0L0 7" stroke="#111" strokeWidth="2" /></Svg>
        </FloatClose>
      </FloatMenu>
    </FloatingBar>
  </RibbonBar>
);

const DrawingArea = () => (
  <Canvas>
    <Scene>
      <path d="M411.500 0V400" stroke="#e8e8e8" />
      <line x1="0" x2="100%" y1="246.500" y2="246.500" stroke="#e8e8e8" />
      <circle cx="520.500" cy="145.500" r="40.500" fill="none" stroke="#e8e8e8" />
    </Scene>
    <ViewLabel>[−][俯视][二维线框]</ViewLabel>
    <Navigator>
      <MdiButtons>
        <Svg width="9" height="10"><path d="M0 8h9" stroke="#eee" strokeWidth="2.500" /></Svg>
        <Svg width="10" height="10"><path d="M1 3h6v6H1zM3 2V1h6v6H8" fill="none" stroke="#eee" strokeWidth="1.500" /></Svg>
        <Svg width="9" height="10"><path d="M1 1l7 8M8 1L1 9" stroke="#eee" strokeWidth="2" /></Svg>
      </MdiButtons>
      <Compass>
        <span>北</span>
        <span>西</span><Cube type="button">上</Cube><span>东</span>
        <span>南</span>
      </Compass>
      <Wcs type="button">WCS <Arrow $dim /></Wcs>
    </Navigator>
    <ScrollStrip />
  </Canvas>
);

const CommandWindow = () => {
  const [value, setValue] = useState('off');
  return (
    <Command>
      <CommandSide>
        <Svg width="17" height="6"><path d="M0 1h17M0 4h17" stroke="#aaa" strokeDasharray="1 1" /></Svg>
        <Svg width="9" height="9"><path d="M1 1l7 7M8 1L1 8" stroke="#eee" strokeWidth="2" /></Svg>
        <Svg width="14" height="14" viewBox="0 0 14 14"><path d="M5 5l8 8" stroke="#ddd" strokeWidth="2.500" /><path d="M5 1L3 3l2 2 2-2c1 4-2 5-4 4S0 4 1 3" fill="none" stroke="#ddd" strokeWidth="1.500" /></Svg>
      </CommandSide>
      <CommandMain>
        <History>{history.map((line, i) => <div key={i}><Mixed text={line} /></div>)}</History>
        <Prompt>
          <Svg width="16" height="16" viewBox="0 0 16 16">
            <circle cx="8" cy="8" r="6.500" fill="none" stroke="#555" strokeWidth="2" strokeDasharray="2.500 1.600" />
            <circle cx="8" cy="8" r="5" fill="#fff" stroke="#666" />
            <circle cx="8" cy="8" r="1.500" fill="#666" />
          </Svg>
          <Arrow $dark />
          <label htmlFor="cmd">
            <b><Mixed text="STATUSBARAUTOWRAP" /></b>
            <Mixed text=" 输入 STATUSBARAUTOWRAP 的新值 <开(ON)>:" />
          </label>
          <CommandInput id="cmd" value={value} onChange={(e) => setValue(e.target.value)} />
          <Caret />
        </Prompt>
      </CommandMain>
    </Command>
  );
};

const StatusBar = () => (
  <StatusWrap>
    <Status>
      {statusCells.map((c, i) => (
        <Cell key={i} $w={c.w} $end={c.end}>
          {c.items?.map((n) => (n === 'v' ? <Arrow key={n} /> : <Icon key={n} name={n} />))}
          {c.text && <span>{c.text}</span>}
          {c.menu && <Arrow />}
        </Cell>
      ))}
    </Status>
  </StatusWrap>
);

export default function App() {
  return (
    <>
      <GlobalStyle />
      <Shell>
        <Header />
        <Ribbon />
        <DocBar>
          <DocTab type="button" $w={116}>开始</DocTab>
          <DocTab type="button" $w={106} $active>Drawing3* <small>×</small></DocTab>
          <Banner>【www.shenducad.com】3，最彻底的办法：系统变量：STATUSBARAUTOWRAP 设为关闭，整个世界彻底清静了!</Banner>
        </DocBar>
        <Toolbar>
          <ToolGroup $n={43}>{drawTools.map((n) => <button key={n} type="button" aria-label={n}><Icon name={n} /></button>)}</ToolGroup>
          <ToolLine />
          <ToolGroup $n={16}>{wallTools.map((n) => <button key={n} type="button" aria-label={n}><Icon name={n} /></button>)}</ToolGroup>
        </Toolbar>
        <DrawingArea />
        <CommandWindow />
        <LayoutTabs>
          <LayoutTab type="button" $active>模型</LayoutTab>
          <LayoutTab type="button">Layout1</LayoutTab>
          <LayoutTab type="button" $add>+</LayoutTab>
        </LayoutTabs>
        <StatusBar />
      </Shell>
    </>
  );
}

const GlobalStyle = createGlobalStyle`
  * { box-sizing: border-box; }
  body { margin: 0; background: #000; overflow: hidden; }
  button, input, select { font: inherit; color: inherit; background: none; border: 0; padding: 0; margin: 0; }
`;

const Svg = styled.svg` display: block; flex: none; `;

const Shell = styled.div`
  display: flex;
  flex-direction: column;
  height: 100vh;
  padding: 0 1px;
  overflow: hidden;
  background: #000;
  color: #dcdcdc;
  font: 11px/14px ${SANS};
`;

const Arrow = styled.i`
  flex: none;
  width: 0;
  height: 0;
  border: solid transparent;
  border-width: 4px 3px 0;
  border-top-color: #e6e6e6;
  ${(p) => p.$big && css` border-width: 5px 4px 0; `}
  ${(p) => p.$dark && css` border-top-color: #777; `}
  ${(p) => p.$dim && css` border-top-color: #9b9ea5; `}
  ${(p) => p.$up && css` border-width: 0 3px 4px; border-bottom-color: #333; `}
`;

const RightArrow = styled(Arrow)` border-width: 4px 0 4px 5px; border-color: transparent transparent transparent #eee; `;
const SideArrow = styled(Arrow)` margin-left: 4px; margin-right: -10px; `;

const HeaderGrid = styled.header`
  flex: none;
  display: grid;
  grid-template-columns: 37px 1fr;
  grid-template-rows: 14px 19px;
  background: #4b4b4b;
`;

const AppButton = styled.button`
  grid-row: 1 / 3;
  display: grid;
  grid-template-columns: 26px 1fr;
  align-items: center;
  justify-items: center;
  margin: 0 0 3px 1px;
  border: 1px solid #333;
  border-top: 0;
  background: linear-gradient(#d0d0d0, #8b8b8b);
  overflow: hidden;
`;
const AppLetter = styled.b` grid-row: 2; color: #111; font-size: 8px; line-height: 8px; padding-left: 10px; `;
const AppArrow = styled(Arrow)` grid-row: 1; grid-column: 2; border-top-color: #222; `;

const TitleBar = styled.div`
  display: flex;
  align-items: flex-end;
  height: 14px;
  overflow: hidden;
  background: #fff;

  > * { flex: none; height: 22px; display: flex; align-items: center; }
`;
const QuickAccess = styled.div`
  width: 235px;
  gap: 7px;
  padding-left: 9px;
  background: linear-gradient(#777, #4d4d4d);
`;
const QuickButton = styled.button` width: 16px; display: flex; justify-content: center; `;
const BarLine = styled.i` width: 1px; height: 22px; background: #888; `;
const Caption = styled.div`
  && { flex: 1; }
  justify-content: center;
  gap: 11px;
  color: #222;
  white-space: nowrap;
`;
const InfoCenter = styled.div`
  width: 419px;
  gap: 5px;
  padding-left: 5px;
  background: linear-gradient(#777, #4d4d4d);
`;
const Search = styled.input`
  flex: none;
  width: 169px;
  height: 20px;
  padding-left: 5px;
  border: 1px solid #333;
  background: #747474;
  font-size: 10px;
  font-style: italic;
  &::placeholder { color: #bbb; }
`;
const SignIn = styled.a` color: #ddd; text-decoration: none; white-space: nowrap; margin-right: 48px; `;
const Dot = styled.i` width: 11px; height: 11px; border-radius: 50%; background: #e8672a; `;
const WindowButtons = styled.div`
  width: 151px;
  justify-content: space-between;
  padding: 0 17px 0 40px;
`;

const TabBar = styled.nav`
  display: flex;
  align-items: center;
  gap: 1px;
  padding-left: 7px;
  border-top: 1px solid #3a3a3a;
`;
const RibbonTab = styled.button`
  height: 18px;
  padding: 0 8px;
  border: 1px solid transparent;
  border-bottom: 0;
  color: #d2d2d2;
  font-family: Lato, 'Noto Sans CJK SC', sans-serif;
  white-space: nowrap;
  ${(p) => p.$active && css` background: linear-gradient(#737373, #5b5b5b); border-color: #333; color: #f0f0f0; `}
`;
const Collapse = styled.button`
  width: 13px;
  height: 7px;
  margin: 0 5px 0 20px;
  display: flex;
  align-items: center;
  justify-content: center;
  border-radius: 2px;
  background: #e6e6e6;
`;

const RibbonBar = styled.section`
  position: relative;
  flex: none;
  display: flex;
  height: 96px;
  padding-left: 1px;
  border-top: 1px solid #666;
  border-bottom: 4px solid #343434;
  background: linear-gradient(#585858, #383838 80%, #484848);
`;
const PanelBox = styled.div`
  flex: none;
  width: ${(p) => p.$w}px;
  display: flex;
  flex-direction: column;
  border-right: 2px solid #444;
  background: #5a5a5a;
`;
const PanelBody = styled.div` flex: 1; display: flex; align-items: flex-start; padding-top: 2px; min-height: 0; `;
const PanelTitle = styled.div`
  height: 18px;
  display: flex;
  align-items: center;
  justify-content: center;
  gap: 6px;
  background: linear-gradient(#464646, #505050);
  white-space: nowrap;
  ${(p) => p.$active && css` box-shadow: 0 1px #3c7da8; `}
`;
const Divider = styled.i` width: 2px; height: 68px; margin: 2px 10px 0 0; background: #7b7b7b; `;
const Columns = styled.div` display: flex; gap: ${(p) => p.$gap || 7}px; `;
const Column = styled.div` display: flex; flex-direction: column; align-items: flex-start; padding-left: ${(p) => p.$pad || 0}px; `;
const Row = styled.div` display: flex; gap: 7px; `;
const ToolButton = styled.button`
  height: 23px;
  display: flex;
  align-items: center;
  gap: 5px;
  white-space: nowrap;
  span + ${Arrow} { margin-left: 2px; }
`;
const BigButton = styled.button`
  width: ${(p) => p.$w}px;
  display: flex;
  flex-direction: column;
  align-items: center;
  gap: 4px;
  padding-top: 2px;
`;
const BigLabel = styled.div` display: flex; align-items: center; line-height: 14px; `;

const LayerColumn = styled.div` flex: 1; display: flex; flex-direction: column; gap: 2px; padding: 0 9px 0 2px; `;
const LayerIcons = styled.div` position: relative; display: flex; justify-content: space-between; padding: 0 0 0 4px; `;
const Alert = styled.i` position: absolute; left: 11px; top: 1px; width: 11px; height: 11px; border-radius: 50%; background: #ea6a2a; `;
const ComboBox = styled.div`
  display: flex;
  align-items: center;
  gap: 2px;
  height: 21px;
  padding: 0 3px;
  border: 1px solid #333;
  background: linear-gradient(#707070, #555);

  select { flex: 1; appearance: none; outline: 0; min-width: 0; }
`;
const Swatch = styled.i` width: 13px; height: 13px; margin: 0 2px; background: #fff; border: 1px solid #222; `;

const FloatingBar = styled.div`
  position: absolute;
  left: 948px;
  top: -15px;
  width: 210px;
  padding: 1px;
  border: 1px solid #2c76b0;
  background: #fff;
`;
const FloatCaption = styled.div` height: 5px; `;
const FloatMenu = styled.div` display: flex; height: 21px; background: #f0f0f0; `;
const Grip = styled.i` width: 8px; margin: 1px 2px 1px 1px; border: 1px solid #555; background: linear-gradient(90deg, #eee 2px, #555 2px 4px, #eee 4px); `;
const FloatItems = styled.div`
  flex: 1;
  display: flex;
  align-items: center;
  justify-content: space-between;
  padding: 0 7px;
  color: #222;
`;
const FloatClose = styled.button`
  width: 12px;
  height: 12px;
  margin: 0 1px;
  display: flex;
  align-items: center;
  justify-content: center;
  border: 1px solid #111;
  background: #3b94dc;
`;

const DocBar = styled.div`
  flex: none;
  display: flex;
  align-items: center;
  height: 21px;
  padding-left: 15px;
  background: #3a3a3a;
`;
const DocTab = styled.button`
  position: relative;
  z-index: 0;
  display: flex;
  align-items: center;
  width: ${(p) => p.$w}px;
  height: 20px;
  padding-left: ${(p) => (p.$active ? 14 : 15)}px;
  color: ${(p) => (p.$active ? '#f2f2f2' : '#aaa')};

  &::before {
    content: '';
    position: absolute;
    z-index: -1;
    inset: 0 0 0 4px;
    border-radius: 5px 5px 0 0;
    transform: skewX(-20deg);
    background: ${(p) => (p.$active ? 'linear-gradient(#757575, #5c5c5c)' : '#505050')};
  }
  small { color: #333; padding-left: 30px; }
`;
const Banner = styled.div`
  flex: 1;
  z-index: 1;
  height: 19px;
  padding-left: 10px;
  background: #d6d6d6;
  color: #16752b;
  font-size: 15px;
  line-height: 18px;
  white-space: nowrap;
  overflow: hidden;
`;

const Toolbar = styled.div`
  flex: none;
  display: flex;
  align-items: center;
  height: 30px;
  margin-right: -6px;
  padding-left: 7px;
  border-top: 2px solid #777;
  border-bottom: 3px solid #6b6b6b;
  background: #505050;
`;
const ToolGroup = styled.div`
  flex: ${(p) => p.$n} 1 0;
  display: flex;
  button { flex: 1; min-width: 0; display: flex; justify-content: center; }
`;
const ToolLine = styled.i` width: 1px; height: 18px; margin: 0 2px; background: #999; `;

const Canvas = styled.main`
  position: relative;
  flex: 1;
  min-height: 0;
  display: flex;
  align-items: flex-start;
  background: #1e2731;
`;
const Scene = styled.svg` position: absolute; inset: 0; width: 100%; height: 100%; `;
const ViewLabel = styled.div` padding: 6px 3px; color: #ddd; font-size: 12px; `;
const Navigator = styled.div`
  width: 77px;
  margin-left: auto;
  padding-top: 9px;
  display: flex;
  flex-direction: column;
  align-items: center;
`;
const MdiButtons = styled.div` display: flex; gap: 9px; padding-left: 8px; `;
const Compass = styled.div`
  width: 56px;
  height: 56px;
  margin: 14px 13px 0 8px;
  display: grid;
  grid-template: 1fr 26px 1fr / 1fr 26px 1fr;
  align-items: center;
  justify-items: center;
  border: 6px solid #454b53;
  border-radius: 50%;
  color: #bbb;
  font-size: 9px;
  line-height: 9px;

  span:nth-child(1), span:nth-child(5) { grid-column: 1 / 4; }
  span:nth-child(1) { margin-top: -13px; }
  span:nth-child(5) { margin-bottom: -13px; }
  span:nth-child(2) { margin-left: -13px; }
  span:nth-child(4) { margin-right: -13px; }
`;
const Cube = styled.button` width: 24px; height: 24px; background: #b1b1b1; color: #444; font-size: 14px; line-height: 20px; `;
const Wcs = styled.button`
  width: 45px;
  height: 17px;
  margin: 12px 19px 0 13px;
  display: flex;
  align-items: center;
  justify-content: space-between;
  padding: 0 5px 0 4px;
  border: 1px solid #a5a8ae;
  border-radius: 4px;
  background: #85888f;
  color: #4d5158;
  font: 10px 'Liberation Sans', sans-serif;
`;
const ScrollStrip = styled.i` align-self: stretch; width: 5px; background: linear-gradient(#b4cde8, #87a3c3 45%, #a9c3de); `;

const Command = styled.section`
  flex: none;
  display: flex;
  border-top: 3px solid #606060;
  color: #111;
  font: 12px/14px 'Noto Sans CJK SC', sans-serif;
`;
const Mono = styled.span` font: 11px/1 'DejaVu Sans Mono', monospace; font-weight: inherit; `;
const CommandSide = styled.div`
  width: 21px;
  display: flex;
  flex-direction: column;
  align-items: center;
  gap: 7px;
  padding-top: 2px;
  background: linear-gradient(#707070, #383838);
`;
const CommandMain = styled.div` flex: 1; min-width: 0; `;
const History = styled.div`
  padding: 1px 3px 2px;
  background: #c7c7c7;
  white-space: pre;

  div { height: 14px; }
`;
const Prompt = styled.div`
  display: flex;
  align-items: center;
  height: 21px;
  padding-left: 4px;
  background: #fff;
  white-space: pre;

  ${Arrow} { margin: 0 6px 0 2px; }
`;
const CommandInput = styled.input` width: 20px; margin-left: 4px; outline: 0; font: 11px/14px 'DejaVu Sans Mono', monospace; `;
const Caret = styled.i` width: 1px; height: 13px; background: #111; `;

const LayoutTabs = styled.div`
  flex: none;
  display: flex;
  align-items: flex-start;
  height: 20px;
  padding-left: 14px;
  gap: 5px;
  background: #373737;
`;
const LayoutTab = styled.button`
  position: relative;
  z-index: 0;
  height: 17px;
  padding: 0 8px;
  color: ${(p) => (p.$active ? '#fff' : '#aaa')};
  ${(p) => p.$add && css` padding: 0 6px; font-size: 15px; font-weight: 600; `}

  &::before {
    content: '';
    position: absolute;
    z-index: -1;
    inset: 0;
    border-radius: 0 0 5px 5px;
    transform: skewX(15deg);
    background: ${(p) => (p.$active ? 'linear-gradient(#606060, #a0a0a0)' : '#505050')};
  }
`;

const StatusWrap = styled.footer` flex: none; display: flex; padding-bottom: 3px; background: linear-gradient(#373737 21px, #000 21px); `;
const Status = styled.div`
  margin-left: auto;
  display: flex;
  height: 21px;
  border-top: 1px solid #7a7a7a;
  background: #4b4b4b;
  color: #f0f0f0;
`;
const Cell = styled.div`
  width: ${(p) => p.$w}px;
  display: flex;
  align-items: center;
  justify-content: ${(p) => (p.$end ? 'flex-end' : 'space-evenly')};
  padding-right: ${(p) => (p.$end ? 5 : 0)}px;
  border-left: 2px solid #727272;
  white-space: nowrap;
`;
